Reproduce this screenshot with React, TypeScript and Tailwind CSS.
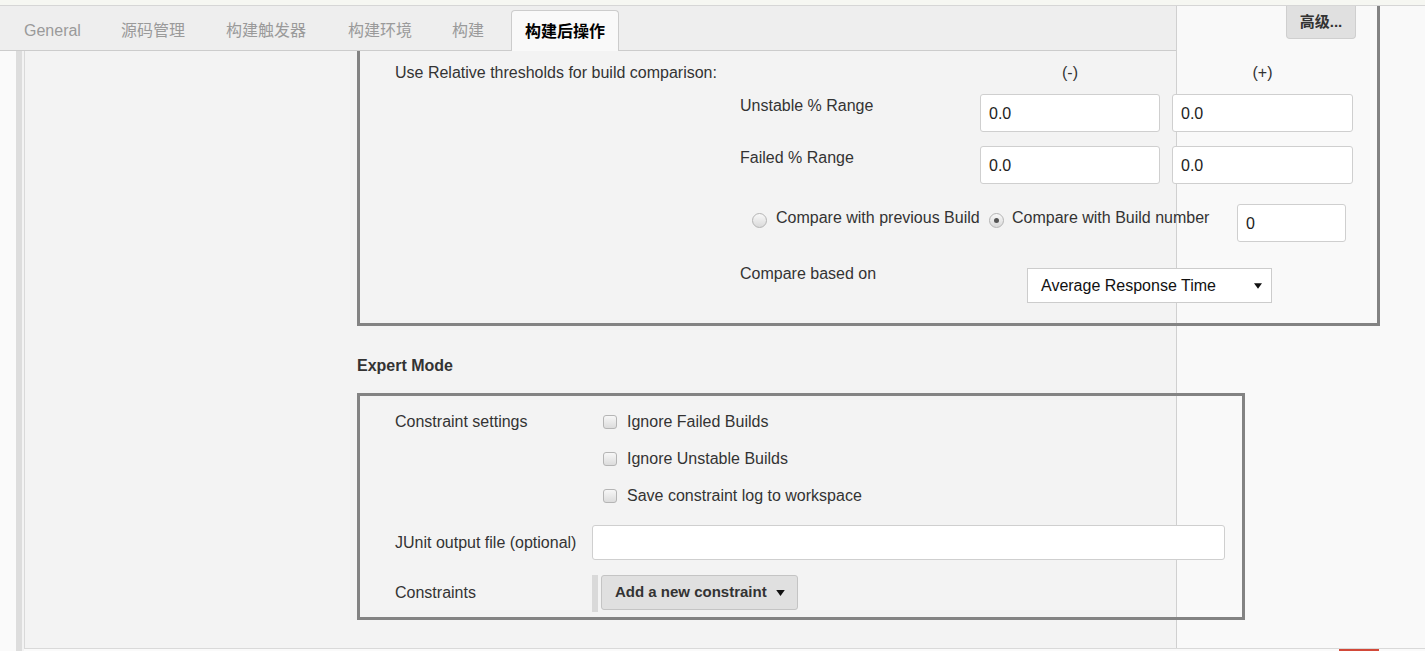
import React from "react";

function Caret({ size = 9 }: { size?: number }) {
  return (
    <svg width={size} height={Math.round(size * 0.7)} viewBox="0 0 10 7" className="shrink-0">
      <path d="M0 0h10L5 7z" fill="#111" />
    </svg>
  );
}

function Radio({ checked = false }: { checked?: boolean }) {
  return (
    <span className="mt-[9px] flex h-[15px] w-[15px] shrink-0 items-center justify-center rounded-full border border-[#b4b4b4] bg-[linear-gradient(#f8f8f8,#dadada)]">
      {checked && <span className="h-[5px] w-[5px] rounded-full bg-[#555]" />}
    </span>
  );
}

function Checkbox({ label }: { label: string }) {
  return (
    <label className="flex h-[37px] items-center pl-[11px]">
      <span className="h-[14px] w-[14px] shrink-0 rounded-[3px] border border-[#b5b5b5] bg-[linear-gradient(#f7f7f7,#dcdcdc)]" />
      <span className="ml-[10px]">{label}</span>
    </label>
  );
}

function Field({ value, w }: { value: string; w: string }) {
  return (
    <input
      readOnly
      value={value}
      className={`h-[38px] ${w} rounded-[3px] border border-[#cfcfcf] bg-white pl-[8px] pt-[1px] text-[16px] text-[#222] outline-none`}
    />
  );
}

const tabs = [
  { label: "General", w: "w-[97px]" },
  { label: "源码管理", w: "w-[105px]" },
  { label: "构建触发器", w: "w-[122px]" },
  { label: "构建环境", w: "w-[104px]" },
  { label: "构建", w: "w-[72px]" },
];

export default function App() {
  return (
    <div className="relative h-[651px] w-[1425px] overflow-hidden bg-[#fafafa] font-['Liberation_Sans','Noto_Sans_CJK_SC',sans-serif] text-[16px] text-[#333]">
      <div className="h-[6px] border-b border-[#d6d6d6] bg-[#f6f7f2]" />

      <div className="flex h-[645px]">
        <div className="w-[16px] bg-[#fafafa]" />
        <div className="w-[6px] bg-[#dddddd]" />
        <div className="w-[2px] bg-[#f3f3f3]" />
        <div className="flex flex-1 flex-col">
          <main className="h-[643px] overflow-hidden border-b border-l border-[#d9d9d9] bg-[linear-gradient(to_right,#f3f3f3_1151px,#d0d0d0_1151px,#d0d0d0_1152px,#f9f9f9_1152px)] pl-[332px]">
            {/* performance thresholds box (scrolled, top edge out of view) */}
            <section className="w-[1023px] border-x-[3px] border-b-[3px] border-[#838383] pb-[20px] pl-[35px] pt-[54px]">
              <div className="flex h-[24px] items-center pt-[1px]">
                <span className="w-[585px] shrink-0">Use Relative thresholds for build comparison:</span>
                <span className="w-[180px] text-center">(-)</span>
                <span className="ml-[12px] w-[181px] text-center">(+)</span>
              </div>

              <div className="mt-[10px] flex items-start">
                <div className="w-[345px] shrink-0" />
                <span className="w-[240px] shrink-0 pt-[1px] leading-[22px]">Unstable % Range</span>
                <Field value="0.0" w="w-[180px]" />
                <div className="ml-[12px]">
                  <Field value="0.0" w="w-[181px]" />
                </div>
              </div>

              <div className="mt-[14px] flex items-start">
                <div className="w-[345px] shrink-0" />
                <span className="w-[240px] shrink-0 pt-[1px] leading-[22px]">Failed % Range</span>
                <Field value="0.0" w="w-[180px]" />
                <div className="ml-[12px]">
                  <Field value="0.0" w="w-[181px]" />
                </div>
              </div>

              <div className="mt-[20px] flex items-start">
                <div className="w-[357px] shrink-0" />
                <Radio />
                <span className="ml-[9px] w-[213px] shrink-0 pt-[3px] leading-[22px]">Compare with previous Build</span>
                <Radio checked />
                <span className="ml-[8px] w-[225px] shrink-0 pt-[3px] leading-[22px]">Compare with Build number</span>
                <Field value="0" w="w-[109px]" />
              </div>

              <div className="mt-[20px] flex items-start">
                <div className="w-[345px] shrink-0" />
                <span className="w-[287px] shrink-0 pt-[1px] leading-[22px]">Compare based on</span>
                <div className="mt-[6px] flex h-[35px] w-[245px] items-center justify-between border border-[#cccccc] bg-white pl-[13px] pr-[9px] pt-[1px] text-[#111]">
                  <span>Average Response Time</span>
                  <Caret size={8} />
                </div>
              </div>
            </section>

            <h3 className="mt-[28px] pt-[1px] font-bold leading-[22px]">Expert Mode</h3>

            <section className="mt-[16px] h-[227px] w-[888px] border-[3px] border-[#838383] pl-[35px] pt-[7px]">
              <div className="flex">
                <span className="flex h-[37px] w-[197px] shrink-0 items-center">Constraint settings</span>
                <div className="flex flex-col">
                  <Checkbox label="Ignore Failed Builds" />
                  <Checkbox label="Ignore Unstable Builds" />
                  <Checkbox label="Save constraint log to workspace" />
                </div>
              </div>

              <div className="mt-[11px] flex items-center">
                <span className="w-[197px] shrink-0">JUnit output file (optional)</span>
                <input readOnly className="h-[35px] w-[633px] rounded-[3px] border border-[#cfcfcf] bg-white outline-none" />
              </div>

              <div className="mt-[15px] flex h-[37px] items-center">
                <span className="w-[197px] shrink-0 pb-[1px]">Constraints</span>
                <div className="h-[37px] w-[6px] bg-[#d9d9d9]" />
                <button className="ml-[3px] flex h-[35px] items-center self-start rounded-[3px] border border-[#c4c4c4] bg-[#e0e0e0] pl-[13px] pr-[12px] text-[15px] font-bold text-[#333]">
                  Add a new constraint
                  <span className="ml-[9px]">
                    <Caret />
                  </span>
                </button>
              </div>
            </section>
          </main>
          <div className="flex h-[2px]">
            <div className="ml-[1315px] w-[40px] bg-[#d24939]" />
          </div>
        </div>
      </div>

      {/* sticky tab bar */}
      <nav className="absolute left-0 top-[6px] flex h-[45px] w-[1176px] items-end border-b border-[#cccccc] bg-[#eeeeee] pl-[4px]">
        {tabs.map((t) => (
          <span key={t.label} className={`flex h-[41px] ${t.w} items-center pl-[20px] pt-[2px] text-[#9a9a9a]`}>
            {t.label}
          </span>
        ))}
        <span className="-mb-px ml-[7px] flex h-[41px] w-[108px] items-center justify-center rounded-t-[4px] border border-b-0 border-[#cccccc] bg-[#f9f9f9] pt-[1px] font-bold text-black">
          构建后操作
        </span>
      </nav>

      <button className="absolute left-[1286px] top-[6px] flex h-[33px] w-[70px] items-center justify-center rounded-b-[4px] border border-t-0 border-[#cfcfcf] bg-[#e0e0e0] pt-[1px] text-[15px] font-bold text-[#333]">
        高级...
      </button>
    </div>
  );
}
